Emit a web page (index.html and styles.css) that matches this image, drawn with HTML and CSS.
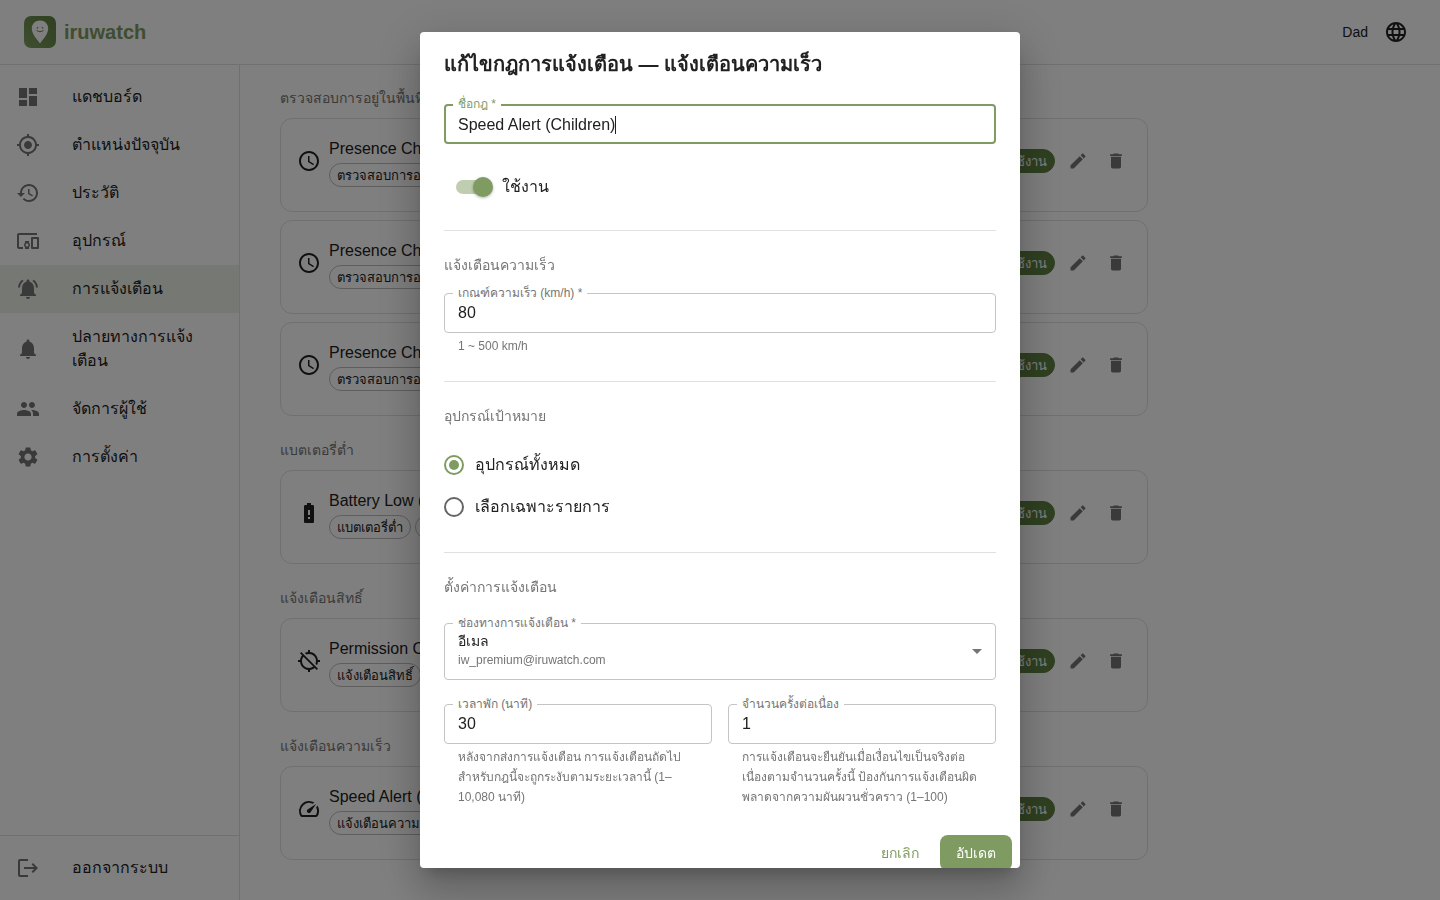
FILE: index.html
```
<!DOCTYPE html>
<html lang="th">
<head>
    <meta charset="UTF-8">
    <meta name="viewport" content="width=device-width, initial-scale=1.0">
    <title>iruwatch - การแจ้งเตือน</title>
    <link rel="stylesheet" href="styles.css">
</head>
<body>
    <svg class="sprite" aria-hidden="true">
        <symbol id="clock" viewBox="0 0 24 24"><path d="M11.99 2C6.47 2 2 6.48 2 12s4.47 10 9.99 10C17.52 22 22 17.52 22 12S17.52 2 11.99 2zM12 20c-4.42 0-8-3.58-8-8s3.58-8 8-8 8 3.58 8 8-3.58 8-8 8zm.5-13H11v6l5.25 3.15.75-1.23-4.5-2.67z"/></symbol>
        <symbol id="edit" viewBox="0 0 24 24"><path d="M3 17.46v3.04c0 .28.22.5.5.5h3.04c.13 0 .26-.05.35-.15L17.81 9.94l-3.75-3.75L3.15 17.1c-.1.1-.15.22-.15.36zM20.71 7.04c.39-.39.39-1.02 0-1.41l-2.34-2.34c-.39-.39-1.02-.39-1.41 0l-1.83 1.83 3.75 3.75 1.83-1.83z"/></symbol>
        <symbol id="delete" viewBox="0 0 24 24"><path d="M6 19c0 1.1.9 2 2 2h8c1.1 0 2-.9 2-2V7H6v12zM19 4h-3.5l-1-1h-5l-1 1H5v2h14V4z"/></symbol>
    </svg>

    <div class="app">
        <header class="topbar">
            <div class="logo">
                <svg class="logo-mark" viewBox="0 0 32 32" aria-hidden="true">
                    <defs>
                        <linearGradient id="logoBg" x1="1" y1="0" x2="0" y2="1">
                            <stop offset="0" stop-color="#5c8040"/>
                            <stop offset="1" stop-color="#7f9f60"/>
                        </linearGradient>
                    </defs>
                    <rect width="32" height="32" rx="7" fill="url(#logoBg)"/>
                    <path d="M16 4.500c-4.700 0-8.200 3.500-8.200 8 0 5.500 5 10.500 8.200 15 3.200-4.500 8.200-9.500 8.200-15 0-4.500-3.500-8-8.200-8z" fill="#fff"/>
                    <circle cx="13.500" cy="11.700" r="0.800" fill="#5c8040"/>
                    <circle cx="18.500" cy="11.700" r="0.800" fill="#5c8040"/>
                    <path d="M12.500 14.200c1.500 2 5.500 2 7 0" fill="none" stroke="#5c8040" stroke-width="0.900" stroke-linecap="round"/>
                </svg>
                <span>iruwatch</span>
            </div>
            <div class="topbar-right">
                <span>Dad</span>
                <button class="lang-button" type="button" aria-label="ภาษา">
                    <svg class="icon" viewBox="0 0 24 24"><path d="M11.99 2C6.47 2 2 6.48 2 12s4.470 10 9.990 10C17.520 22 22 17.520 22 12S17.520 2 11.990 2zm6.930 6h-2.950c-.32-1.250-.78-2.450-1.380-3.560 1.840.63 3.370 1.910 4.330 3.560zM12 4.040c.83 1.200 1.480 2.530 1.910 3.960h-3.820c.43-1.430 1.080-2.760 1.910-3.960zM4.260 14C4.100 13.360 4 12.690 4 12s.1-1.360.26-2h3.380c-.08.66-.14 1.320-.14 2 0 .68.06 1.340.14 2H4.260zm.82 2h2.950c.32 1.250.78 2.450 1.380 3.560-1.840-.63-3.370-1.900-4.330-3.560zm2.950-8H5.080c.96-1.660 2.490-2.930 4.330-3.560C8.810 5.550 8.350 6.750 8.030 8zM12 19.960c-.83-1.200-1.480-2.530-1.910-3.960h3.820c-.43 1.430-1.080 2.760-1.910 3.960zM14.340 14H9.660c-.09-.66-.16-1.320-.16-2 0-.68.07-1.350.16-2h4.680c.09.65.16 1.320.16 2 0 .68-.07 1.340-.16 2zm.25 5.560c.6-1.110 1.060-2.310 1.380-3.560h2.950c-.96 1.650-2.490 2.930-4.330 3.560zM16.360 14c.08-.66.14-1.320.14-2 0-.68-.06-1.340-.14-2h3.380c.16.64.26 1.310.26 2s-.1 1.360-.26 2h-3.380z"/></svg>
                </button>
            </div>
        </header>

        <div class="layout">
            <nav class="sidebar">
                <div class="nav-list">
                    <a class="nav-item" href="#dashboard">
                        <svg class="icon" viewBox="0 0 24 24"><path d="M3 13h8V3H3v10zm0 8h8v-6H3v6zm10 0h8V11h-8v10zm0-18v6h8V3h-8z"/></svg>
                        <span>แดชบอร์ด</span>
                    </a>
                    <a class="nav-item" href="#location">
                        <svg class="icon" viewBox="0 0 24 24"><path d="M12 8c-2.210 0-4 1.790-4 4s1.790 4 4 4 4-1.790 4-4-1.790-4-4-4zm8.940 3c-.46-4.170-3.770-7.480-7.940-7.940V1h-2v2.060C6.830 3.520 3.520 6.830 3.060 11H1v2h2.060c.46 4.170 3.770 7.480 7.940 7.940V23h2v-2.060c4.170-.46 7.480-3.770 7.940-7.940H23v-2h-2.060zM12 19c-3.870 0-7-3.130-7-7s3.130-7 7-7 7 3.130 7 7-3.130 7-7 7z"/></svg>
                        <span>ตำแหน่งปัจจุบัน</span>
                    </a>
                    <a class="nav-item" href="#history">
                        <svg class="icon" viewBox="0 0 24 24"><path d="M13 3c-4.970 0-9 4.030-9 9H1l3.890 3.890.07.14L9 12H6c0-3.870 3.130-7 7-7s7 3.130 7 7-3.130 7-7 7c-1.930 0-3.680-.79-4.940-2.060l-1.420 1.420C8.270 19.990 10.510 21 13 21c4.970 0 9-4.030 9-9s-4.030-9-9-9zm-1 5v5l4.280 2.540.72-1.210-3.500-2.080V8H12z"/></svg>
                        <span>ประวัติ</span>
                    </a>
                    <a class="nav-item" href="#devices">
                        <svg class="icon" viewBox="0 0 24 24"><path d="M3 6h18V4H3c-1.100 0-2 .9-2 2v12c0 1.100.9 2 2 2h4v-2H3V6zm10 6H9v1.780c-.61.55-1 1.330-1 2.220s.39 1.670 1 2.220V20h4v-1.780c.61-.55 1-1.340 1-2.220s-.39-1.670-1-2.220V12zm-2 5.500c-.83 0-1.500-.67-1.500-1.500s.67-1.500 1.500-1.500 1.500.67 1.500 1.500-.67 1.500-1.500 1.500zM22 8h-6c-.5 0-1 .5-1 1v10c0 .5.5 1 1 1h6c.5 0 1-.5 1-1V9c0-.5-.5-1-1-1zm-1 10h-4v-8h4v8z"/></svg>
                        <span>อุปกรณ์</span>
                    </a>
                    <a class="nav-item active" href="#alerts">
                        <svg class="icon" viewBox="0 0 24 24"><path d="M7.580 4.080 6.150 2.650C3.750 4.480 2.170 7.300 2.030 10.500h2c.15-2.650 1.510-4.970 3.550-6.420zm12.390 6.420h2c-.15-3.200-1.730-6.020-4.120-7.850l-1.420 1.430c2.020 1.450 3.390 3.770 3.540 6.420zM18 11c0-3.070-1.640-5.640-4.500-6.320V4c0-.83-.67-1.500-1.500-1.500s-1.500.67-1.500 1.500v.68C7.630 5.360 6 7.920 6 11v5l-2 2v1h16v-1l-2-2v-5zm-6 11c.14 0 .27-.01.4-.04.65-.14 1.180-.58 1.440-1.180.1-.24.15-.5.15-.78h-4c.01 1.100.9 2 2.010 2z"/></svg>
                        <span>การแจ้งเตือน</span>
                    </a>
                    <a class="nav-item" href="#channels">
                        <svg class="icon" viewBox="0 0 24 24"><path d="M12 22c1.100 0 2-.9 2-2h-4c0 1.100.89 2 2 2zm6-6v-5c0-3.070-1.640-5.640-4.500-6.320V4c0-.83-.67-1.500-1.500-1.500s-1.500.67-1.500 1.500v.68C7.630 5.360 6 7.920 6 11v5l-2 2v1h16v-1l-2-2z"/></svg>
                        <span>ปลายทางการแจ้งเตือน</span>
                    </a>
                    <a class="nav-item" href="#users">
                        <svg class="icon" viewBox="0 0 24 24"><path d="M16 11c1.660 0 2.990-1.340 2.990-3S17.660 5 16 5c-1.660 0-3 1.340-3 3s1.340 3 3 3zm-8 0c1.660 0 2.990-1.340 2.990-3S9.660 5 8 5C6.340 5 5 6.340 5 8s1.340 3 3 3zm0 2c-2.330 0-7 1.170-7 3.500V19h14v-2.500c0-2.330-4.670-3.500-7-3.500zm8 0c-.29 0-.62.02-.97.05 1.160.84 1.970 1.970 1.970 3.450V19h6v-2.500c0-2.330-4.670-3.500-7-3.500z"/></svg>
                        <span>จัดการผู้ใช้</span>
                    </a>
                    <a class="nav-item" href="#settings">
                        <svg class="icon" viewBox="0 0 24 24"><path d="M19.140 12.940c.04-.3.06-.61.06-.94 0-.32-.02-.64-.07-.94l2.030-1.580c.18-.14.23-.41.12-.61l-1.920-3.320c-.12-.22-.37-.29-.59-.22l-2.390.96c-.5-.38-1.030-.7-1.620-.94l-.36-2.540c-.04-.24-.24-.41-.48-.41h-3.840c-.24 0-.43.17-.47.41l-.36 2.540c-.59.24-1.130.57-1.620.94l-2.390-.96c-.22-.08-.47 0-.59.22L2.740 8.870c-.12.21-.08.47.12.61l2.030 1.580c-.05.3-.09.63-.09.94s.02.64.07.94l-2.030 1.580c-.18.14-.23.41-.12.61l1.920 3.320c.12.22.37.29.59.22l2.390-.96c.5.38 1.030.7 1.620.94l.36 2.540c.05.24.24.41.48.41h3.840c.24 0 .44-.17.47-.41l.36-2.540c.59-.24 1.130-.56 1.620-.94l2.390.96c.22.08.47 0 .59-.22l1.920-3.320c.12-.22.07-.47-.12-.61l-2.010-1.580zM12 15.600c-1.980 0-3.600-1.620-3.600-3.600s1.620-3.600 3.600-3.600 3.600 1.620 3.600 3.600-1.620 3.600-3.600 3.600z"/></svg>
                        <span>การตั้งค่า</span>
                    </a>
                </div>
                <div class="nav-footer">
                    <a class="nav-item" href="#logout">
                        <svg class="icon" viewBox="0 0 24 24"><path d="m17 7-1.410 1.410L18.170 11H8v2h10.170l-2.580 2.580L17 17l5-5zM4 5h8V3H4c-1.100 0-2 .9-2 2v14c0 1.100.9 2 2 2h8v-2H4V5z"/></svg>
                        <span>ออกจากระบบ</span>
                    </a>
                </div>
            </nav>

            <main class="content">
                <section class="rule-group">
                    <h2>ตรวจสอบการอยู่ในพื้นที่</h2>
                    <article class="rule-card">
                        <svg class="icon"><use href="#clock"/></svg>
                        <div class="rule-info">
                            <div class="rule-name">Presence Check (Children)</div>
                            <div class="chips"><span class="chip">ตรวจสอบการอยู่ในพื้นที่</span></div>
                        </div>
                        <span class="chip chip-on">ใช้งาน</span>
                        <button class="icon-button" type="button" aria-label="แก้ไข"><svg><use href="#edit"/></svg></button>
                        <button class="icon-button" type="button" aria-label="ลบ"><svg><use href="#delete"/></svg></button>
                    </article>
                    <article class="rule-card">
                        <svg class="icon"><use href="#clock"/></svg>
                        <div class="rule-info">
                            <div class="rule-name">Presence Check (Children)</div>
                            <div class="chips"><span class="chip">ตรวจสอบการอยู่ในพื้นที่</span></div>
                        </div>
                        <span class="chip chip-on">ใช้งาน</span>
                        <button class="icon-button" type="button" aria-label="แก้ไข"><svg><use href="#edit"/></svg></button>
                        <button class="icon-button" type="button" aria-label="ลบ"><svg><use href="#delete"/></svg></button>
                    </article>
                    <article class="rule-card">
                        <svg class="icon"><use href="#clock"/></svg>
                        <div class="rule-info">
                            <div class="rule-name">Presence Check (Children)</div>
                            <div class="chips"><span class="chip">ตรวจสอบการอยู่ในพื้นที่</span></div>
                        </div>
                        <span class="chip chip-on">ใช้งาน</span>
                        <button class="icon-button" type="button" aria-label="แก้ไข"><svg><use href="#edit"/></svg></button>
                        <button class="icon-button" type="button" aria-label="ลบ"><svg><use href="#delete"/></svg></button>
                    </article>
                </section>

                <section class="rule-group">
                    <h2>แบตเตอรี่ต่ำ</h2>
                    <article class="rule-card">
                        <svg class="icon" viewBox="0 0 24 24"><path d="M15.670 4H14V2h-4v2H8.330C7.600 4 7 4.600 7 5.330v15.330C7 21.400 7.600 22 8.330 22h7.330c.74 0 1.340-.6 1.340-1.330V5.330C17 4.600 16.400 4 15.670 4zM13 18h-2v-2h2v2zm0-4h-2V9h2v5z"/></svg>
                        <div class="rule-info">
                            <div class="rule-name">Battery Low (Children)</div>
                            <div class="chips"><span class="chip">แบตเตอรี่ต่ำ</span><span class="chip">อีเมล</span></div>
                        </div>
                        <span class="chip chip-on">ใช้งาน</span>
                        <button class="icon-button" type="button" aria-label="แก้ไข"><svg><use href="#edit"/></svg></button>
                        <button class="icon-button" type="button" aria-label="ลบ"><svg><use href="#delete"/></svg></button>
                    </article>
                </section>

                <section class="rule-group">
                    <h2>แจ้งเตือนสิทธิ์</h2>
                    <article class="rule-card">
                        <svg class="icon" viewBox="0 0 24 24"><path d="M20.940 11c-.46-4.170-3.770-7.480-7.940-7.940V1h-2v2.060c-1.130.12-2.190.46-3.160.97l1.500 1.500C10.160 5.190 11.060 5 12 5c3.870 0 7 3.130 7 7 0 .94-.19 1.840-.52 2.650l1.500 1.500c.5-.96.84-2.020.97-3.150H23v-2h-2.060zM3 4.270l2.040 2.040C3.970 7.620 3.250 9.230 3.060 11H1v2h2.060c.46 4.170 3.770 7.480 7.940 7.940V23h2v-2.060c1.770-.2 3.380-.91 4.690-1.980L19.730 21 21 19.730 4.270 3 3 4.270zm13.270 13.270C15.090 18.450 13.610 19 12 19c-3.870 0-7-3.130-7-7 0-1.610.55-3.090 1.460-4.270l9.810 9.810z"/></svg>
                        <div class="rule-info">
                            <div class="rule-name">Permission Change (Children)</div>
                            <div class="chips"><span class="chip">แจ้งเตือนสิทธิ์</span></div>
                        </div>
                        <span class="chip chip-on">ใช้งาน</span>
                        <button class="icon-button" type="button" aria-label="แก้ไข"><svg><use href="#edit"/></svg></button>
                        <button class="icon-button" type="button" aria-label="ลบ"><svg><use href="#delete"/></svg></button>
                    </article>
                </section>

                <section class="rule-group">
                    <h2>แจ้งเตือนความเร็ว</h2>
                    <article class="rule-card">
                        <svg class="icon" viewBox="0 0 24 24"><path d="m20.380 8.570-1.230 1.850a8 8 0 0 1-.22 7.580H5.070A8 8 0 0 1 15.580 6.850l1.850-1.230A10 10 0 0 0 3.350 19a2 2 0 0 0 1.720 1h13.850a2 2 0 0 0 1.740-1 10 10 0 0 0-.27-10.440zm-9.790 6.840a2 2 0 0 0 2.830 0l5.660-8.490-8.490 5.660a2 2 0 0 0 0 2.830z"/></svg>
                        <div class="rule-info">
                            <div class="rule-name">Speed Alert (Children)</div>
                            <div class="chips"><span class="chip">แจ้งเตือนความเร็ว</span></div>
                        </div>
                        <span class="chip chip-on">ใช้งาน</span>
                        <button class="icon-button" type="button" aria-label="แก้ไข"><svg><use href="#edit"/></svg></button>
                        <button class="icon-button" type="button" aria-label="ลบ"><svg><use href="#delete"/></svg></button>
                    </article>
                </section>
            </main>
        </div>
    </div>

    <div class="backdrop">
        <div class="dialog" role="dialog" aria-modal="true" aria-labelledby="dialogTitle">
            <h1 id="dialogTitle">แก้ไขกฎการแจ้งเตือน — แจ้งเตือนความเร็ว</h1>
            <form class="dialog-form">
                <div class="dialog-body">
                    <div class="field">
                        <input type="text" id="ruleName" value="Speed Alert (Children)" autofocus>
                        <label for="ruleName">ชื่อกฎ *</label>
                        <span class="caret"></span>
                    </div>
                    <label class="switch">
                        <input type="checkbox" role="switch" checked>
                        <span>ใช้งาน</span>
                    </label>
                    <hr>
                    <section class="form-section">
                        <h3>แจ้งเตือนความเร็ว</h3>
                        <div class="field">
                            <input type="text" inputmode="numeric" id="speed" value="80" aria-describedby="speedHelp">
                            <label for="speed">เกณฑ์ความเร็ว (km/h) *</label>
                            <p id="speedHelp">1 ~ 500 km/h</p>
                        </div>
                    </section>
                    <hr>
                    <section class="form-section">
                        <h3 id="targetTitle">อุปกรณ์เป้าหมาย</h3>
                        <div role="radiogroup" aria-labelledby="targetTitle">
                            <label class="radio"><input type="radio" name="target" checked><span>อุปกรณ์ทั้งหมด</span></label>
                            <label class="radio"><input type="radio" name="target"><span>เลือกเฉพาะรายการ</span></label>
                        </div>
                    </section>
                    <hr>
                    <section class="form-section wide">
                        <h3>ตั้งค่าการแจ้งเตือน</h3>
                        <div class="field field-select">
                            <select id="channel" aria-describedby="channelMail">
                                <option>อีเมล</option>
                            </select>
                            <label for="channel">ช่องทางการแจ้งเตือน *</label>
                            <span class="select-detail" id="channelMail">iw_premium@iruwatch.com</span>
                            <svg class="select-arrow" viewBox="0 0 24 24" aria-hidden="true"><path d="m7 10 5 5 5-5z"/></svg>
                        </div>
                        <div class="field-row">
                            <div class="field">
                                <input type="text" inputmode="numeric" id="cooldown" value="30" aria-describedby="cooldownHelp">
                                <label for="cooldown">เวลาพัก (นาที)</label>
                                <p id="cooldownHelp">หลังจากส่งการแจ้งเตือน การแจ้งเตือนถัดไปสำหรับกฎนี้จะถูกระงับตามระยะเวลานี้ (1–10,080 นาที)</p>
                            </div>
                            <div class="field">
                                <input type="text" inputmode="numeric" id="count" value="1" aria-describedby="countHelp">
                                <label for="count">จำนวนครั้งต่อเนื่อง</label>
                                <p id="countHelp">การแจ้งเตือนจะยืนยันเมื่อเงื่อนไขเป็นจริงต่อเนื่องตามจำนวนครั้งนี้ ป้องกันการแจ้งเตือนผิดพลาดจากความผันผวนชั่วคราว (1–100)</p>
                            </div>
                        </div>
                    </section>
                </div>
                <div class="dialog-actions">
                    <button class="button" type="button">ยกเลิก</button>
                    <button class="button button-primary" type="submit">อัปเดต</button>
                </div>
            </form>
        </div>
    </div>

    <script>
        const ruleName = document.getElementById('ruleName');
        ruleName.focus();
        ruleName.setSelectionRange(ruleName.value.length, ruleName.value.length);
    </script>
</body>
</html>
```
FILE: styles.css
```
:root {
    --primary: #7f9b62;
    --primary-dark: #5f8042;
    --text: #212121;
    --text-muted: #757575;
    --line: #e0e0e0;
}
* {
    box-sizing: border-box;
}
body {
    margin: 0;
    font-family: "Liberation Sans", sans-serif;
    font-size: 16px;
    line-height: 24px;
    color: var(--text);
    background-color: #fff;
}
h1, h2, h3, p {
    margin: 0;
}
button, input, select {
    font-family: inherit;
    color: inherit;
}
.sprite {
    display: none;
}
.icon {
    width: 24px;
    height: 24px;
    flex-shrink: 0;
    fill: currentColor;
}
.app {
    height: 100vh;
    display: flex;
    flex-direction: column;
    overflow: hidden;
}

/* Header */
.topbar {
    display: flex;
    justify-content: space-between;
    align-items: center;
    padding: 12px 24px;
    border-bottom: 1px solid var(--line);
}
.logo {
    display: flex;
    align-items: center;
    gap: 8px;
    font-size: 20px;
    font-weight: bold;
    color: var(--primary);
}
.logo-mark {
    width: 32px;
    height: 32px;
}
.topbar-right {
    display: flex;
    align-items: center;
    gap: 8px;
    font-size: 14px;
}
.lang-button {
    display: flex;
    padding: 8px;
    border: none;
    background: none;
    cursor: pointer;
}

/* Sidebar */
.layout {
    flex: 1;
    display: flex;
    min-height: 0;
}
.sidebar {
    width: 240px;
    flex-shrink: 0;
    display: flex;
    flex-direction: column;
    justify-content: space-between;
    border-right: 1px solid var(--line);
}
.nav-list {
    padding: 8px 0;
}
.nav-footer {
    padding: 8px 0;
    border-top: 1px solid var(--line);
}
.nav-item {
    display: flex;
    align-items: center;
    gap: 32px;
    padding: 12px 16px;
    color: var(--text);
    text-decoration: none;
}
.nav-item .icon {
    color: var(--text-muted);
}
.nav-item.active {
    background-color: #edf0e8;
}

/* Rule list */
.content {
    flex: 1;
    padding: 23px 40px;
    overflow: hidden;
}
.rule-group {
    display: flex;
    flex-direction: column;
    gap: 8px;
    max-width: 868px;
    margin-bottom: 24px;
}
.rule-group h2,
.form-section h3 {
    padding-bottom: 2px;
    font-size: 14px;
    line-height: 20px;
    font-weight: normal;
    color: var(--text-muted);
}
.rule-card {
    display: flex;
    align-items: center;
    gap: 8px;
    padding: 16px 16px 24px;
    border: 1px solid var(--line);
    border-radius: 12px;
}
.rule-info {
    flex: 1;
}
.rule-name {
    line-height: 28px;
}
.chips {
    display: flex;
    gap: 4px;
}
.chip {
    height: 24px;
    padding: 0 7px;
    border: 1px solid #bdbdbd;
    border-radius: 12px;
    font-size: 13px;
    line-height: 23px;
    white-space: nowrap;
}
.chip-on {
    border-color: var(--primary-dark);
    background-color: var(--primary-dark);
    color: #fff;
}
.icon-button {
    display: flex;
    padding: 5px;
    border: none;
    background: none;
    color: var(--text-muted);
    cursor: pointer;
}
.icon-button svg {
    width: 20px;
    height: 20px;
    fill: currentColor;
}

/* Dialog */
.backdrop {
    position: fixed;
    inset: 0;
    display: flex;
    justify-content: center;
    align-items: center;
    padding: 32px;
    background-color: rgba(0,0,0,0.5);
}
.dialog {
    width: 100%;
    max-width: 600px;
    max-height: 100%;
    overflow: hidden;
    border-radius: 4px;
    background-color: #fff;
    box-shadow: 0 11px 15px -7px rgba(0,0,0,0.2), 0 24px 38px 3px rgba(0,0,0,0.14), 0 9px 46px 8px rgba(0,0,0,0.12);
}
.dialog h1 {
    padding: 16px 24px;
    font-size: 20px;
    line-height: 32px;
    font-weight: bold;
}
.dialog-body {
    display: flex;
    flex-direction: column;
    gap: 24px;
    padding: 8px 24px 19px;
}
.dialog hr {
    width: 100%;
    margin: 0;
    border: none;
    border-top: 1px solid var(--line);
}
.form-section {
    display: flex;
    flex-direction: column;
    gap: 16px;
}
.form-section.wide {
    gap: 24px;
}
.field {
    position: relative;
}
.field input,
.field select {
    display: block;
    width: 100%;
    height: 40px;
    padding: 0 13px;
    border: 1px solid #c4c4c4;
    border-radius: 4px;
    outline: none;
    background-color: transparent;
    font-size: 16px;
}
.field input:focus {
    padding: 2px 12px 0;
    border: 2px solid var(--primary);
}
/* label sits on the outline of the field */
.field label {
    position: absolute;
    top: -10px;
    left: 9px;
    padding: 0 5px;
    background-color: #fff;
    font-size: 12px;
    line-height: 20px;
    color: var(--text-muted);
}
.field input:focus + label {
    color: var(--primary);
}
/* steady caret after the rule name, replaces the blinking one */
#ruleName {
    caret-color: transparent;
}
.caret {
    display: none;
    position: absolute;
    top: 12px;
    left: 171px;
    width: 1px;
    height: 18px;
    background-color: var(--text);
    pointer-events: none;
}
.field input:focus ~ .caret {
    display: block;
}
.field p {
    margin: 3px 14px 1px;
    font-size: 12px;
    line-height: 20px;
    color: var(--text-muted);
}
.field select {
    height: 57px;
    padding-bottom: 22px;
    appearance: none;
    font-size: 14px;
}
.select-detail {
    position: absolute;
    left: 14px;
    bottom: 10px;
    font-size: 12px;
    line-height: 20px;
    color: var(--text-muted);
    pointer-events: none;
}
.select-arrow {
    position: absolute;
    top: 16px;
    right: 7px;
    width: 24px;
    height: 24px;
    fill: var(--text-muted);
    pointer-events: none;
}
.field-row {
    display: grid;
    grid-template-columns: 1fr 1fr;
    gap: 16px;
}
.switch {
    display: flex;
    align-items: center;
    align-self: flex-start;
    gap: 12px;
    height: 38px;
    padding-left: 12px;
    cursor: pointer;
}
.switch input {
    position: relative;
    appearance: none;
    width: 34px;
    height: 14px;
    margin: 0;
    border-radius: 7px;
    background-color: #9e9e9e;
}
.switch input::before {
    content: "";
    position: absolute;
    top: -3px;
    left: -3px;
    width: 20px;
    height: 20px;
    border-radius: 50%;
    background-color: #fff;
    box-shadow: 0 1px 3px rgba(0,0,0,0.3);
}
.switch input:checked {
    background-color: #bfcdb0;
}
.switch input:checked::before {
    left: 17px;
    background-color: var(--primary);
}
.radio {
    display: flex;
    align-items: center;
    gap: 11px;
    height: 42px;
    cursor: pointer;
}
.radio input {
    appearance: none;
    width: 20px;
    height: 20px;
    margin: 0;
    border: 2px solid #666;
    border-radius: 50%;
}
.radio input:checked {
    border-color: var(--primary);
    padding: 3px;
    background: var(--primary) content-box;
}
.dialog-actions {
    display: flex;
    justify-content: flex-end;
    gap: 8px;
    padding: 8px;
}
.button {
    min-width: 64px;
    height: 36px;
    padding: 0 8px;
    border: none;
    border-radius: 8px;
    background: none;
    font-size: 14px;
    color: var(--primary);
    cursor: pointer;
}
.button-primary {
    padding: 0 16px;
    background-color: var(--primary);
    color: #fff;
}
```
